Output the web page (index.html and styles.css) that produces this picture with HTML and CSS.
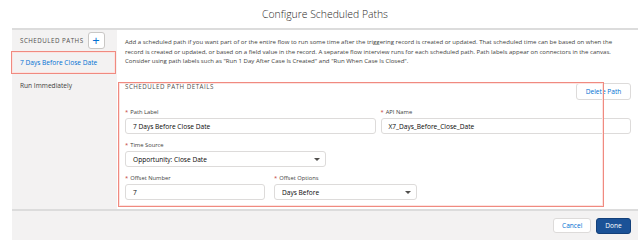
FILE: index.html
```html
<!DOCTYPE html>
<html lang="en">
<head>
    <meta charset="UTF-8">
    <meta name="viewport" content="width=device-width, initial-scale=1.0">
    <title>Configure Scheduled Paths</title>
    <link rel="stylesheet" href="styles.css">
</head>
<body>

    <div class="modal">
        <header class="modal-header">
            <h2 class="modal-title">Configure Scheduled Paths</h2>
        </header>

        <div class="modal-body">
            <nav class="sidebar">
                <div class="sidebar-head">
                    <span class="sidebar-title">Scheduled Paths</span>
                    <button class="add-btn" title="Add Scheduled Path">+</button>
                </div>
                <ul class="path-list">
                    <li class="path-item is-active">
                        7 Days Before Close Date
                        <span class="highlight"></span>
                    </li>
                    <li class="path-item">Run Immediately</li>
                </ul>
            </nav>

            <main class="content">
                <p class="intro">Add a scheduled path if you want part of or the entire flow to run some time after the triggering record is created or updated. That scheduled time can be based on when the record is created or updated, or based on a field value in the record. A separate flow interview runs for each scheduled path. Path labels appear on connectors in the canvas. Consider using path labels such as "Run 1 Day After Case Is Created" and "Run When Case Is Closed".</p>

                <section class="details">
                    <div class="details-head">
                        <h3 class="details-title">Scheduled Path Details</h3>
                        <button class="btn btn-neutral">Delete Path</button>
                    </div>

                    <div class="row row-half">
                        <div class="field">
                            <label class="field-label"><abbr>*</abbr>Path Label</label>
                            <div class="input">7 Days Before Close Date</div>
                        </div>
                        <div class="field">
                            <label class="field-label"><abbr>*</abbr>API Name</label>
                            <div class="input">X7_Days_Before_Close_Date</div>
                        </div>
                    </div>

                    <div class="row row-source">
                        <div class="field">
                            <label class="field-label"><abbr>*</abbr>Time Source</label>
                            <div class="input select">Opportunity: Close Date<span class="caret"></span></div>
                        </div>
                    </div>

                    <div class="row row-offset">
                        <div class="field">
                            <label class="field-label"><abbr>*</abbr>Offset Number</label>
                            <div class="input">7</div>
                        </div>
                        <div class="field">
                            <label class="field-label"><abbr>*</abbr>Offset Options</label>
                            <div class="input select">Days Before<span class="caret"></span></div>
                        </div>
                    </div>

                    <span class="highlight"></span>
                </section>
            </main>
        </div>

        <footer class="modal-footer">
            <button class="btn btn-neutral btn-cancel">Cancel</button>
            <button class="btn btn-brand">Done</button>
        </footer>
    </div>

</body>
</html>
```

FILE: styles.css
```css
body {
    margin: 0;
    background-color: #fff;
    font-family: "Open Sans", "Liberation Sans", sans-serif;
    color: #3e3e3c;
}

.modal {
    margin-left: 12px;
    width: 626px;
    height: 240px;
    display: flex;
    flex-direction: column;
}

/* --- Header --- */
.modal-header {
    height: 28px;
    border-bottom: 2px solid #dcdcdc;
    display: flex;
    align-items: center;
    justify-content: center;
}

.modal-title {
    margin: 0;
    font-size: 10.4px;
    font-weight: 300;
    color: #2b2826;
}

/* --- Body --- */
.modal-body {
    height: 179px;
    display: flex;
}

.sidebar {
    width: 105px;
    background-color: #f3f2f2;
}

.sidebar-head {
    height: 21px;
    padding-left: 8px;
    display: flex;
    align-items: center;
    gap: 4px;
}

.sidebar-title {
    font-size: 6.2px;
    letter-spacing: 0.5px;
    text-transform: uppercase;
    color: #514f4d;
}

.add-btn {
    width: 17px;
    height: 17px;
    padding: 0;
    background: #fff;
    border: 1px solid #c9c7c5;
    border-radius: 3px;
    color: #0070d2;
    font-family: inherit;
    font-size: 13px;
    line-height: 13px;
}

.path-list {
    list-style: none;
    margin: 0;
    padding: 0;
}

.path-item {
    position: relative;
    height: 23px;
    line-height: 23px;
    padding-left: 8px;
    font-size: 6.6px;
    color: #3e3e3c;
}

.path-item.is-active {
    color: #0070d2;
}

/* red annotation boxes drawn over the screenshot */
.highlight {
    position: absolute;
    border: 1px solid #f08a80;
    box-shadow: inset 0 0 0 1px #fde3e0;
    pointer-events: none;
}

.path-item .highlight {
    top: 0;
    bottom: 0;
    left: -1px;
    right: 1px;
}

.content {
    flex: 1;
    padding: 8px 7px 0 8px;
}

.intro {
    margin: 0;
    font-size: 6.05px;
    line-height: 9.5px;
    color: #3e3e3c;
}

.details {
    position: relative;
    margin-top: 15px;
    padding-bottom: 7px;
}

.details .highlight {
    top: 0;
    bottom: 0;
    left: -7px;
    width: 484px;
}

.details-head {
    height: 18px;
    display: flex;
    justify-content: space-between;
    align-items: flex-start;
}

.details-title {
    margin: 0;
    line-height: 10px;
    font-size: 6.2px;
    font-weight: 400;
    letter-spacing: 0.5px;
    text-transform: uppercase;
    color: #514f4d;
}

.row {
    display: grid;
    margin-top: 6px;
}

.row-half {
    margin-top: 7px;
    grid-template-columns: 1fr 1fr;
    gap: 5px;
}

.row-source {
    grid-template-columns: 201px;
}

.row-offset {
    grid-template-columns: 140px 143px;
    gap: 9px;
}

.field-label {
    display: block;
    line-height: 10px;
    margin-bottom: 1px;
    font-size: 5.8px;
    color: #3e3e3c;
}

.field-label abbr {
    color: #c23934;
    margin-right: 2px;
    text-decoration: none;
}

.input {
    position: relative;
    height: 16px;
    line-height: 16px;
    box-sizing: border-box;
    padding-left: 7px;
    border: 1px solid #dddbda;
    border-radius: 3px;
    background: #fff;
    font-size: 6.6px;
    color: #080707;
}

.caret {
    position: absolute;
    right: 5px;
    top: 6px;
    border-left: 3px solid transparent;
    border-right: 3px solid transparent;
    border-top: 3px solid #514f4d;
}

/* --- Buttons --- */
.btn {
    height: 17px;
    padding: 0 8px;
    border-radius: 3px;
    font-family: inherit;
    font-size: 6.6px;
    cursor: pointer;
}

.btn-neutral {
    background: #fff;
    border: 1px solid #dddbda;
    color: #0070d2;
}

.details-head .btn-neutral {
    margin-top: 1px;
    width: 55px;
}

.btn-cancel {
    width: 38px;
    height: 15px;
}

.btn-brand {
    width: 35px;
    height: 16px;
    background: #1b5297;
    border: 1px solid #13407a;
    color: #fff;
}

/* --- Footer --- */
.modal-footer {
    flex: 1;
    display: flex;
    justify-content: flex-end;
    align-items: center;
    gap: 5px;
    padding-right: 7px;
    background-color: #f3f2f2;
    border-top: 2px solid #dcdcdc;
}
```
